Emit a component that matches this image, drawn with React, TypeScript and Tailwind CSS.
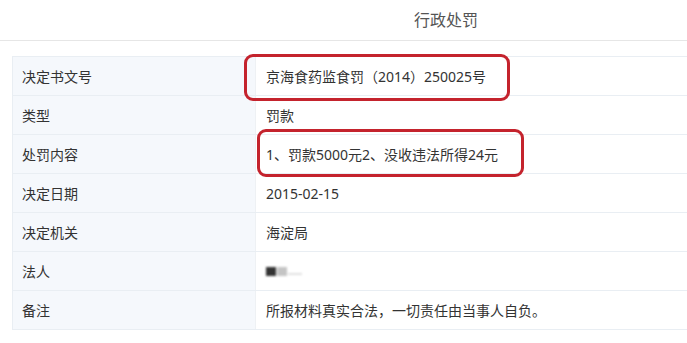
const rows: { label: string; value: string }[] = [
  { label: "决定书文号", value: "京海食药监食罚（2014）250025号" },
  { label: "类型", value: "罚款" },
  { label: "处罚内容", value: "1、罚款5000元2、没收违法所得24元" },
  { label: "决定日期", value: "2015-02-15" },
  { label: "决定机关", value: "海淀局" },
  { label: "法人", value: "" },
  { label: "备注", value: "所报材料真实合法，一切责任由当事人自负。" },
];

function BlurredName() {
  return (
    <div className="flex items-center gap-[1px] blur-[1px]">
      <span className="h-[9px] w-[10px] bg-[#333]" />
      <span className="h-[9px] w-[10px] bg-[#c4c4c4]" />
      <span className="h-[2px] w-[14px] self-end mb-[1px] bg-[#e0e0e0]" />
    </div>
  );
}

export default function App() {
  return (
    <div
      className="w-[687px] h-[343px] overflow-hidden bg-white text-[#333]"
      style={{ fontFamily: '"Noto Sans", "Noto Sans CJK SC", sans-serif' }}
    >
      <div className="h-[41px] border-b border-[#e6e6e6] pl-[414px] pt-[9px] text-[16px] leading-[22px] text-[#555]">
        行政处罚
      </div>
      <div className="relative ml-[12px] mt-[15px] border-t border-l border-[#e9eef3]">
        {rows.map((r) => (
          <div key={r.label} className="grid grid-cols-[242px_1fr] h-[39px] border-b border-[#e9eef3]">
            <div className="flex items-center bg-[#f5f8fc] pl-[9px] text-[14px]">{r.label}</div>
            <div className="flex items-center pl-[10px] text-[14px] border-l border-[#eef1f4]">
              {r.value ? r.value : <BlurredName />}
            </div>
          </div>
        ))}
        <div className="absolute left-[231px] top-[-3px] h-[47px] w-[266px] rounded-[9px] border-[3px] border-[#c4232d]" />
        <div className="absolute left-[244px] top-[72px] h-[48px] w-[267px] rounded-[9px] border-[3px] border-[#c4232d]" />
      </div>
    </div>
  );
}
